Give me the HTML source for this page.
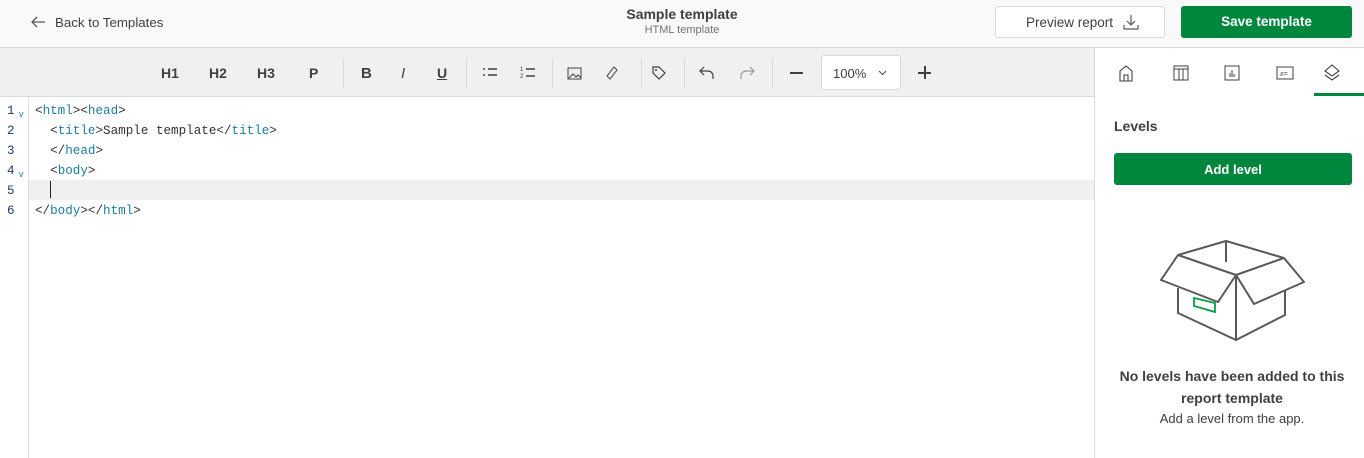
<!DOCTYPE html>
<html><head><style>
*{box-sizing:border-box;margin:0;padding:0}
body{width:1364px;height:458px;overflow:hidden;font-family:"Liberation Sans",sans-serif;background:#fff;position:relative;color:#404040}
.hdr{position:absolute;left:0;top:0;width:1364px;height:48px;background:#f9f9f9;border-bottom:1px solid #d9d9d9}
.abs{position:absolute}
.tb{position:absolute;left:0;top:48px;width:1094px;height:49px;background:#f0f0f0;border-bottom:1px solid #d9d9d9}
.tb .t{position:absolute;top:17px;font-size:14px;font-weight:bold;color:#404040}
.sep{position:absolute;top:10px;width:1px;height:30px;background:#d9d9d9}
.code{position:absolute;font-family:"Liberation Mono",monospace;font-size:12.6px;color:#333;white-space:pre}
.ln{position:absolute;left:7px;font-family:"Liberation Mono",monospace;font-size:12.5px;color:#1d3e6e}
.tg{color:#1a7d9c}
.side{position:absolute;left:1094px;top:48px;width:270px;height:410px;border-left:1px solid #d9d9d9;background:#fff}
</style></head><body>
<div class="hdr">
 <svg class="abs" style="left:30px;top:15px" width="16" height="14" viewBox="0 0 16 14"><path d="M15 7H2M7 2L2 7l5 5" fill="none" stroke="#595959" stroke-width="1.3"/></svg>
 <div class="abs" style="left:55px;top:15px;font-size:13.3px;color:#404040">Back to Templates</div>
 <div class="abs" style="left:582px;top:6px;width:200px;text-align:center;font-size:14px;font-weight:bold;color:#404040">Sample template</div>
 <div class="abs" style="left:582px;top:24px;width:200px;text-align:center;font-size:11px;color:#737373">HTML template</div>
 <div class="abs" style="left:995px;top:6px;width:170px;height:32px;border:1px solid #d9d9d9;border-radius:3px;background:#fff;font-size:13.5px;color:#404040;padding:8px 0 0 30px">Preview report
  <svg class="abs" style="left:127px;top:7px" width="16" height="16" viewBox="0 0 16 16"><path d="M8 1v10M4 7l4 4 4-4M1 11v4h14v-4" fill="none" stroke="#595959" stroke-width="1.2"/></svg></div>
 <div class="abs" style="left:1181px;top:6px;width:171px;height:32px;border-radius:3px;background:#00873d;color:#fff;font-size:13.5px;font-weight:bold;text-align:center;padding-top:8px">Save template</div>
</div>
<div class="tb">
 <span class="t" style="left:161px">H1</span><span class="t" style="left:209px">H2</span><span class="t" style="left:257px">H3</span><span class="t" style="left:309px">P</span>
 <div class="sep" style="left:343px"></div>
 <span class="t" style="left:361px;font-size:15px">B</span><span class="t" style="left:401px;font-style:italic;font-weight:normal;font-size:15px">I</span><span class="t" style="left:437px;text-decoration:underline">U</span>
 <div class="sep" style="left:466px"></div>
 <svg class="abs" style="left:482px;top:18px" width="16" height="12"><path d="M1 3h2M6 3h9M1 9h2M6 9h9" stroke="#404040" stroke-width="1.6"/></svg>
 <svg class="abs" style="left:520px;top:17px" width="16" height="14"><text x="0" y="6" font-size="6" fill="#404040">1</text><text x="0" y="13" font-size="6" fill="#404040">2</text><path d="M6 4h9M6 11h9" stroke="#404040" stroke-width="1.4"/></svg>
 <div class="sep" style="left:552px"></div>
 <svg class="abs" style="left:567px;top:19px" width="15" height="13"><rect x="1" y="1" width="13" height="11" fill="none" stroke="#404040"/><path d="M2 11l4-4 3 3 2-2 3 3" fill="none" stroke="#404040"/></svg>
 <svg class="abs" style="left:605px;top:17px" width="14" height="16"><path d="M9 2l3 3-7 9-3-3z" fill="none" stroke="#595959" stroke-width="1.1"/></svg>
 <div class="sep" style="left:641px"></div>
 <svg class="abs" style="left:651px;top:17px" width="16" height="16"><path d="M2 2h6l6 6-6 6-6-6z" fill="none" stroke="#404040" stroke-width="1.2"/><circle cx="5" cy="5" r="1" fill="#404040"/></svg>
 <div class="sep" style="left:684px"></div>
 <svg class="abs" style="left:698px;top:16px" width="18" height="18"><path d="M6 3L2 7l4 4M2 7h8a5 5 0 0 1 5 5v3" fill="none" stroke="#404040" stroke-width="1.2"/></svg>
 <svg class="abs" style="left:738px;top:16px" width="18" height="18"><path d="M12 3l4 4-4 4M16 7H8a5 5 0 0 0-5 5v3" fill="none" stroke="#999" stroke-width="1.2"/></svg>
 <div class="sep" style="left:772px"></div>
 <div class="abs" style="left:790px;top:24px;width:13px;height:2px;background:#404040"></div>
 <div class="abs" style="left:821px;top:7px;width:80px;height:35px;border:1px solid #d9d9d9;border-radius:3px;background:#fff;font-size:13px;color:#404040;padding:10px 0 0 11px">100%</div>
 <svg class="abs" style="left:878px;top:22px" width="9" height="6"><path d="M1 1l3.5 3.5L8 1" fill="none" stroke="#595959" stroke-width="1.2"/></svg>
 <div class="abs" style="left:918px;top:24px;width:13px;height:2px;background:#404040"></div>
 <div class="abs" style="left:923.5px;top:18px;width:2px;height:13px;background:#404040"></div>
</div>
<div class="abs" style="left:28px;top:97px;width:1px;height:361px;background:#e0e0e0"></div>
<div class="abs" style="left:29px;top:180px;width:1065px;height:20px;background:#f0f0f0"></div>
<div class="ln" style="top:104px">1</div><div class="ln" style="top:124px">2</div><div class="ln" style="top:144px">3</div><div class="ln" style="top:164px">4</div><div class="ln" style="top:184px">5</div><div class="ln" style="top:204px">6</div>
<div class="abs" style="left:19px;top:109px;font-size:9px;color:#1a7d9c">v</div>
<div class="abs" style="left:19px;top:169px;font-size:9px;color:#1a7d9c">v</div>
<div class="code" style="left:35px;top:104px">&lt;<span class="tg">html</span>&gt;&lt;<span class="tg">head</span>&gt;</div>
<div class="code" style="left:35px;top:124px">  &lt;<span class="tg">title</span>&gt;Sample template&lt;/<span class="tg">title</span>&gt;</div>
<div class="code" style="left:35px;top:144px">  &lt;/<span class="tg">head</span>&gt;</div>
<div class="code" style="left:35px;top:164px">  &lt;<span class="tg">body</span>&gt;</div>
<div class="abs" style="left:50px;top:181px;width:1px;height:17px;background:#222"></div>
<div class="code" style="left:35px;top:204px">&lt;/<span class="tg">body</span>&gt;&lt;/<span class="tg">html</span>&gt;</div>
<div class="side">
 <svg class="abs" style="left:22px;top:16px" width="18" height="18"><path d="M3 17V7l6-5 6 5v10zM7 17v-6h4v6" fill="none" stroke="#404040" stroke-width="1.1"/></svg>
 <svg class="abs" style="left:77px;top:17px" width="18" height="16"><rect x="2" y="1" width="14" height="14" fill="none" stroke="#404040"/><path d="M2 4h14M7 4v11M11 4v11" stroke="#404040"/></svg>
 <svg class="abs" style="left:128px;top:16px" width="18" height="18"><rect x="2" y="2" width="14" height="14" fill="none" stroke="#404040"/><path d="M7 13V9M9 13V6M11 13v-3" stroke="#404040"/></svg>
 <svg class="abs" style="left:181px;top:18px" width="18" height="14"><rect x="1" y="1" width="16" height="12" fill="none" stroke="#404040"/><text x="4" y="10" font-size="7" font-style="italic" fill="#404040">x=</text></svg>
 <svg class="abs" style="left:227px;top:15px" width="20" height="20"><path d="M10 2l7 6-7 5-7-5z M3 12l7 5 7-5" fill="none" stroke="#404040" stroke-width="1.1"/></svg>
 <div class="abs" style="left:219px;top:45px;width:51px;height:3px;background:#00873d"></div>
 <div class="abs" style="left:19px;top:70px;font-size:14px;font-weight:bold;color:#404040">Levels</div>
 <div class="abs" style="left:19px;top:105px;width:238px;height:32px;background:#00873d;border-radius:3px;color:#fff;font-size:13px;font-weight:bold;text-align:center;padding-top:9px">Add level</div>
 <svg class="abs" style="left:0;top:0" width="270" height="410"><g fill="none" stroke="#595959" stroke-width="2" stroke-linejoin="round">
  <path d="M83 207L131 193L189 210L141 227Z"/>
  <path d="M131 193V214"/>
  <path d="M83 207L66 232L123 254L141 227"/>
  <path d="M189 210L209 234L159 256L141 227"/>
  <path d="M141 227V292"/>
  <path d="M83 240V265L141 292L190 267V242"/>
 </g><path d="M99 250L120 255L120 264L99 258Z" fill="none" stroke="#0a9e45" stroke-width="1.8"/></svg>
 <div class="abs" style="left:0;top:317px;width:274px;text-align:center;font-size:14px;font-weight:bold;color:#404040;line-height:22px">No levels have been added to this<br>report template</div>
 <div class="abs" style="left:0;top:363px;width:274px;text-align:center;font-size:13px;color:#404040">Add a level from the app.</div>
</div>
</body></html>
